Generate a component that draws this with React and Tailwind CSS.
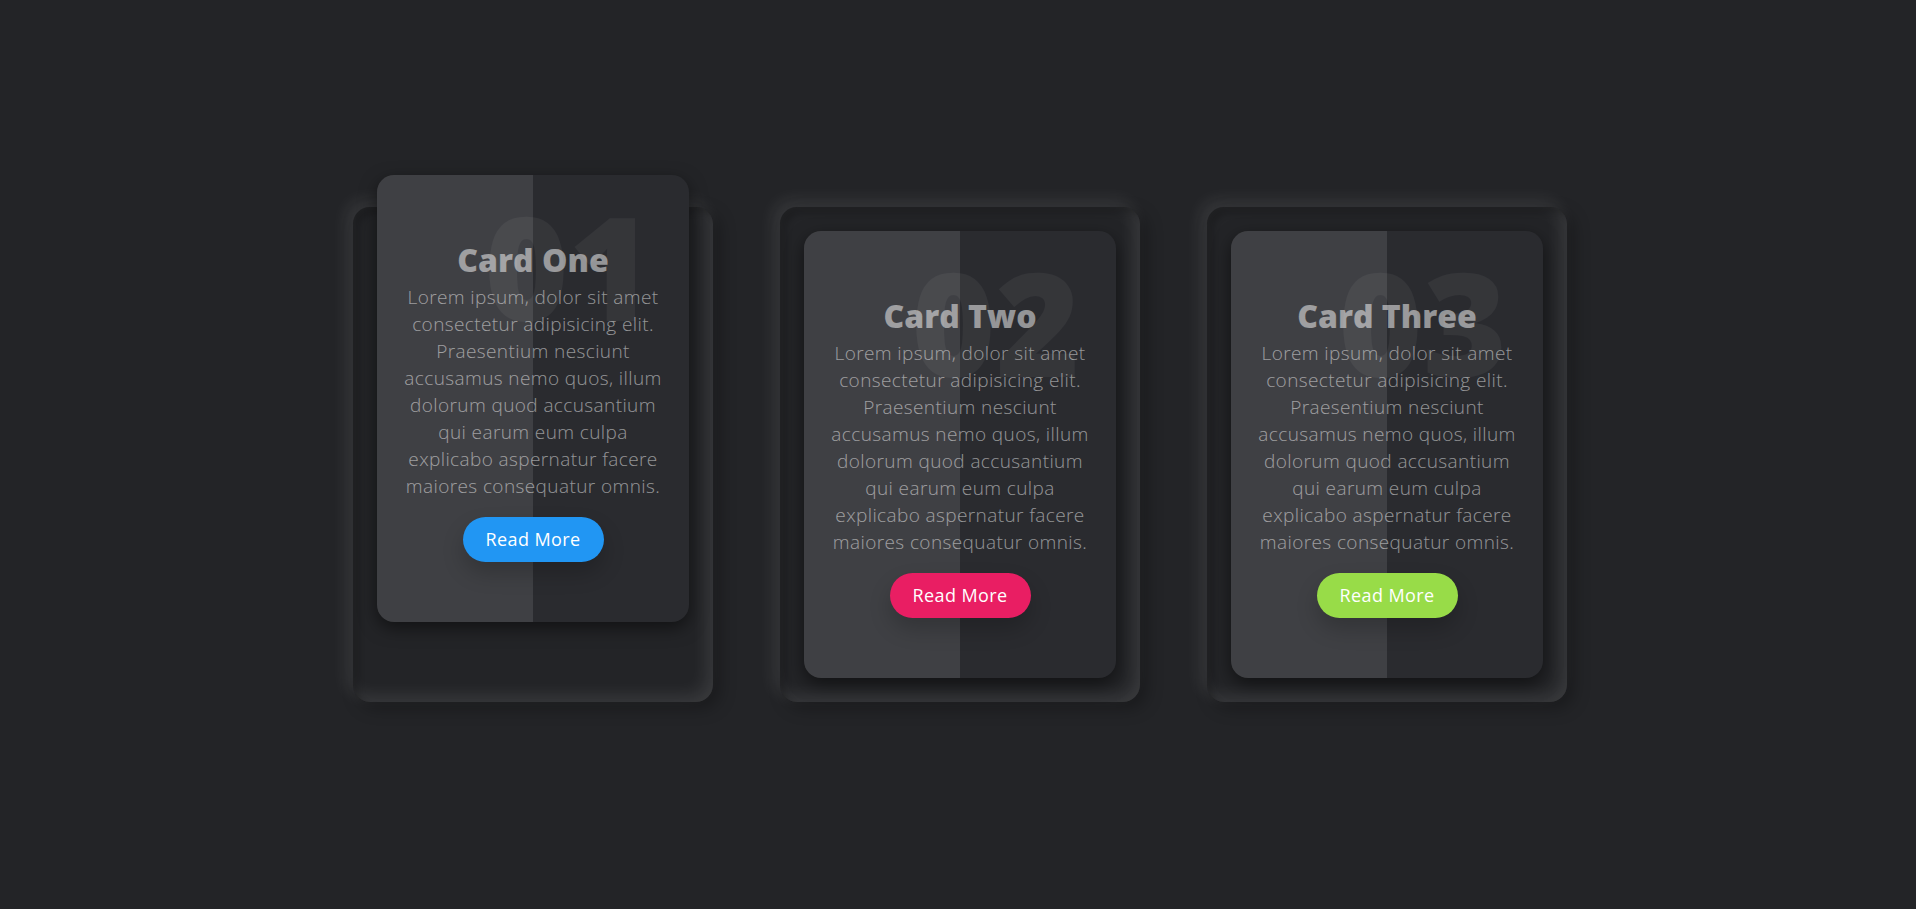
import React from "react";

const lines = [
  "Lorem ipsum, dolor sit amet",
  "consectetur adipisicing elit.",
  "Praesentium nesciunt",
  "accusamus nemo quos, illum",
  "dolorum quod accusantium",
  "qui earum eum culpa",
  "explicabo aspernatur facere",
  "maiores consequatur omnis.",
];

const cards = [
  { num: "01", title: "Card One", btn: "bg-[#2196f3]", lifted: true },
  { num: "02", title: "Card Two", btn: "bg-[#e91e63]", lifted: false },
  { num: "03", title: "Card Three", btn: "bg-[#98dc48]", lifted: false },
];

const Card = ({ card }) => (
  <div className="w-[360px] h-[495px] p-[24px] rounded-[17px] bg-[#232427] shadow-[inset_6px_6px_6px_rgba(0,0,0,0.2),inset_-6px_-6px_17px_rgba(255,255,255,0.1),6px_6px_17px_rgba(0,0,0,0.3),-6px_-6px_17px_rgba(255,255,255,0.1)]">
    <div
      className={`relative h-full rounded-[17px] bg-[#2a2b2f] shadow-[0_6px_17px_rgba(0,0,0,0.5)] flex items-center justify-center ${
        card.lifted ? "-translate-y-[56px]" : ""
      }`}
    >
      {/* lighter left half */}
      <div className="absolute left-0 top-0 w-1/2 h-full rounded-l-[17px] bg-white/10" />
      {/* big faint number */}
      <div className="absolute top-[18px] right-[36px] text-[144px] leading-none font-extrabold text-white/5 select-none">
        {card.num}
      </div>
      <div className="relative text-center">
        <h3 className="text-[32px] leading-[48px] font-extrabold text-white/50">
          {card.title}
        </h3>
        <p className="text-[19px] leading-[27px] font-light tracking-[0.4px] text-white/50">
          {lines.map((l) => (
            <span key={l} className="block whitespace-nowrap">
              {l}
            </span>
          ))}
        </p>
        <a
          href="#"
          className={`inline-block mt-[17px] px-[23px] py-[9px] rounded-full text-[18px] leading-[27px] font-medium tracking-[0.4px] text-white shadow-[0_11px_22px_rgba(0,0,0,0.2)] ${card.btn}`}
        >
          Read More
        </a>
      </div>
    </div>
  </div>
);

export default function App() {
  return (
    <div
      className="min-h-screen bg-[#232427] flex items-center justify-center"
      style={{ fontFamily: "'Open Sans', 'Noto Sans', sans-serif" }}
    >
      <div className="flex gap-[67px] translate-x-[2px]">
        {cards.map((c) => (
          <Card key={c.num} card={c} />
        ))}
      </div>
    </div>
  );
}
